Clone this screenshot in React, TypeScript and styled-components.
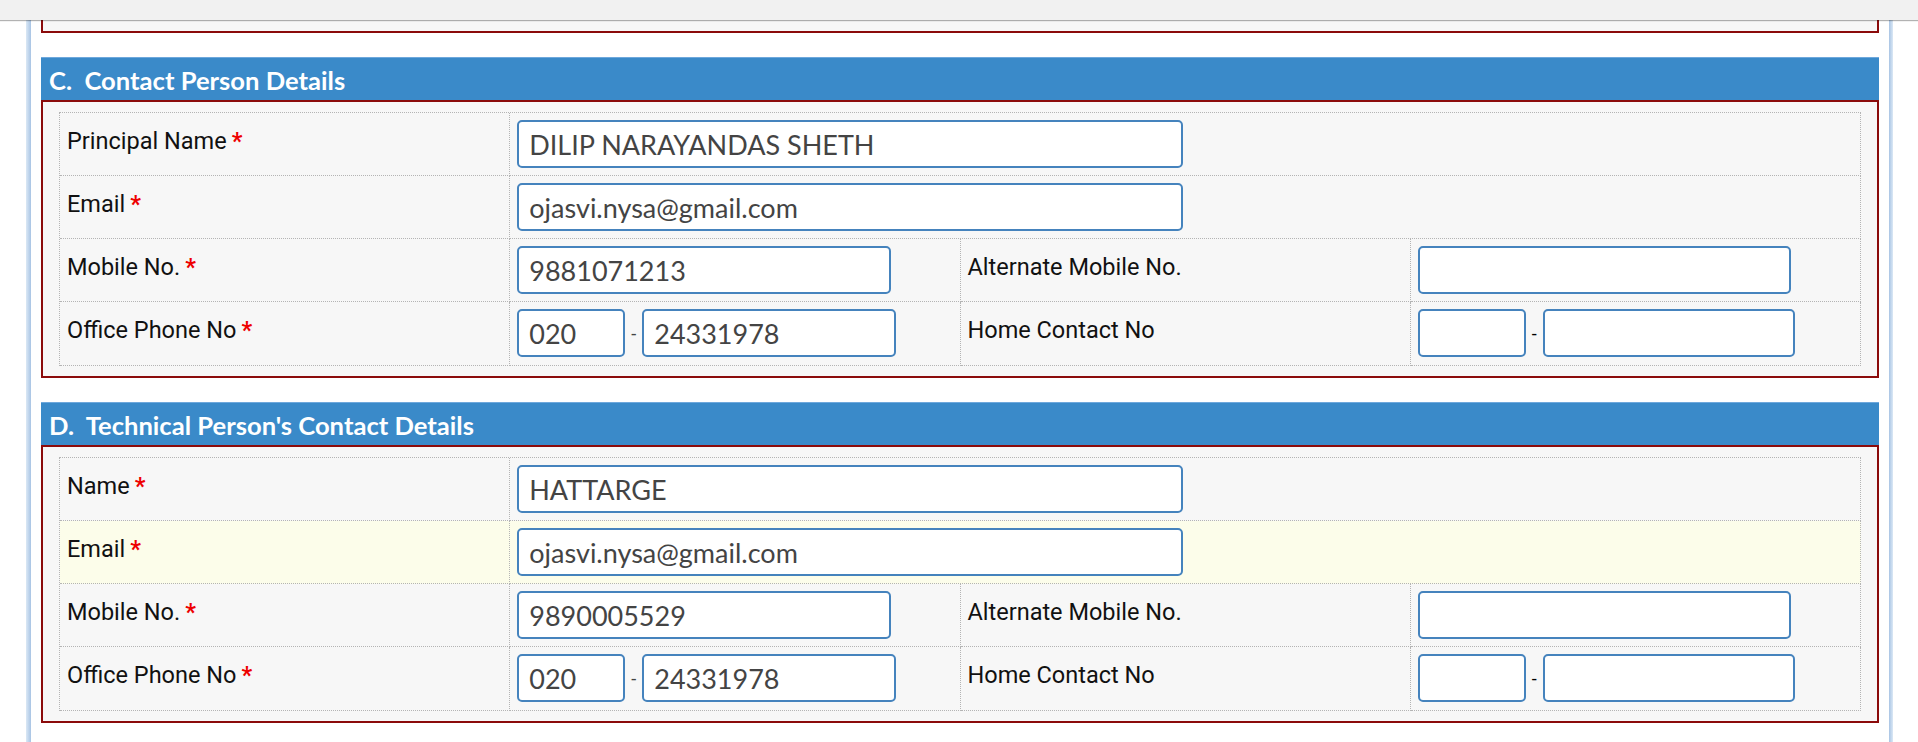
import React from "react"
import styled, { createGlobalStyle } from "styled-components"

const GlobalStyle = createGlobalStyle`
  html, body {
    margin: 0;
    padding: 0;
    background: #fff;
  }
  body {
    font-family: Roboto, "Liberation Sans", Arial, sans-serif;
  }
  * {
    box-sizing: border-box;
  }
`

const TopBar = styled.div`
  position: fixed;
  top: 0;
  left: 0;
  right: 0;
  height: 20px;
  background: #f1f1f1;
  box-shadow: 0 1px 1px rgba(0, 0, 0, 0.3);
  z-index: 10;
`

const Page = styled.div`
  display: flex;
  min-height: 100vh;
  padding-left: 26px;
`

const Rail = styled.div<{ $w: number; $flip?: boolean }>`
  flex: none;
  width: ${({ $w }) => $w}px;
  background: linear-gradient(
    ${({ $flip }) => ($flip ? "to left" : "to right")},
    #dbe8f5,
    #a8c4e4
  );
`

const Content = styled.div`
  flex: none;
  width: 1858px;
  padding: 0 10px 40px;
`

const Section = styled.section`
  margin-top: 24px;
`

const Heading = styled.h3`
  margin: 0;
  height: 43px;
  padding: 3px 8px 0;
  border-top: 1px solid #6ea8dc;
  background: #3a8ac9;
  color: #fff;
  font-family: Lato, "Open Sans", sans-serif;
  font-weight: bold;
  font-size: 25.6px;
  line-height: 39px;
  white-space: pre;
`

const Box = styled.div`
  border: 2px solid #8b0b0b;
  background: #f7f7f7;
  padding: 10px 16px 10px;
`

const PrevBox = styled(Box)`
  border-top: none;
  padding-top: 0;
  padding-bottom: 11px;
`

const PrevTail = styled.div`
  height: 20px;
  border: 1px dotted #b4b4b4;
  border-top: none;
`

const Grid = styled.div`
  display: grid;
  grid-template-columns: repeat(4, 1fr);
  border-top: 1px dotted #b4b4b4;
  border-left: 1px dotted #b4b4b4;
`

const Cell = styled.div<{ $span?: number; $hl?: boolean }>`
  grid-column: span ${({ $span }) => $span ?? 1};
  border-right: 1px dotted #b4b4b4;
  border-bottom: 1px dotted #b4b4b4;
  background: ${({ $hl }) => ($hl ? "#fcfdea" : "#f7f7f7")};
`

const LabelCell = styled(Cell)`
  padding: 14px 7px 0;
  font-size: 23.5px;
  line-height: 28px;
  color: #111;
`

const FieldCell = styled(Cell)<{ $tall?: boolean }>`
  display: flex;
  align-items: center;
  padding: 7px 7px ${({ $tall }) => ($tall ? 8 : 7)}px;
`

const Req = styled.span`
  margin-left: 5px;
  color: #ee0000;
  font-weight: bold;
`

const TextBox = styled.input<{ $w: number }>`
  width: ${({ $w }) => $w}px;
  height: 48px;
  padding: 0 10px;
  border: 2px solid #4583bd;
  border-radius: 5px;
  background: #fff;
  color: #444;
  font-family: Lato, "Open Sans", sans-serif;
  font-size: 27px;
  outline: none;
`

const Dash = styled.span<{ $dark?: boolean }>`
  margin: 0 6px;
  font-size: 18px;
  color: ${({ $dark }) => ($dark ? "#000" : "#444")};
`

type Person = {
  letter: string
  title: string
  nameLabel: string
  name: string
  email: string
  mobile: string
  stdCode: string
  phone: string
  highlight?: number
}

const people: Person[] = [
  {
    letter: "C.",
    title: "Contact Person Details",
    nameLabel: "Principal Name",
    name: "DILIP NARAYANDAS SHETH",
    email: "ojasvi.nysa@gmail.com",
    mobile: "9881071213",
    stdCode: "020",
    phone: "24331978",
  },
  {
    letter: "D.",
    title: "Technical Person's Contact Details",
    nameLabel: "Name",
    name: "HATTARGE",
    email: "ojasvi.nysa@gmail.com",
    mobile: "9890005529",
    stdCode: "020",
    phone: "24331978",
    highlight: 1,
  },
]

function Label({ text, required, hl }: { text: string; required?: boolean; hl?: boolean }) {
  return (
    <LabelCell $hl={hl}>
      {text}
      {required && <Req>*</Req>}
    </LabelCell>
  )
}

function ContactSection({ p }: { p: Person }) {
  const hl = (row: number) => p.highlight === row
  return (
    <Section>
      <Heading>{`${p.letter}  ${p.title}`}</Heading>
      <Box>
        <Grid>
          <Label text={p.nameLabel} required hl={hl(0)} />
          <FieldCell $span={3} $hl={hl(0)}>
            <TextBox $w={666} defaultValue={p.name} />
          </FieldCell>

          <Label text="Email" required hl={hl(1)} />
          <FieldCell $span={3} $hl={hl(1)}>
            <TextBox $w={666} defaultValue={p.email} />
          </FieldCell>

          <Label text="Mobile No." required hl={hl(2)} />
          <FieldCell $hl={hl(2)}>
            <TextBox $w={374} defaultValue={p.mobile} />
          </FieldCell>
          <Label text="Alternate Mobile No." hl={hl(2)} />
          <FieldCell $hl={hl(2)}>
            <TextBox $w={373} defaultValue="" />
          </FieldCell>

          <Label text="Office Phone No" required hl={hl(3)} />
          <FieldCell $tall $hl={hl(3)}>
            <TextBox $w={108} defaultValue={p.stdCode} />
            <Dash>-</Dash>
            <TextBox $w={254} defaultValue={p.phone} />
          </FieldCell>
          <Label text="Home Contact No" hl={hl(3)} />
          <FieldCell $tall $hl={hl(3)}>
            <TextBox $w={108} defaultValue="" />
            <Dash $dark>-</Dash>
            <TextBox $w={252} defaultValue="" />
          </FieldCell>
        </Grid>
      </Box>
    </Section>
  )
}

export default function App() {
  return (
    <>
      <GlobalStyle />
      <TopBar />
      <Page>
        <Rail $w={5} />
        <Content>
          <PrevBox>
            <PrevTail />
          </PrevBox>
          {people.map((p) => (
            <ContactSection key={p.letter} p={p} />
          ))}
        </Content>
        <Rail $w={4} $flip />
      </Page>
    </>
  )
}
